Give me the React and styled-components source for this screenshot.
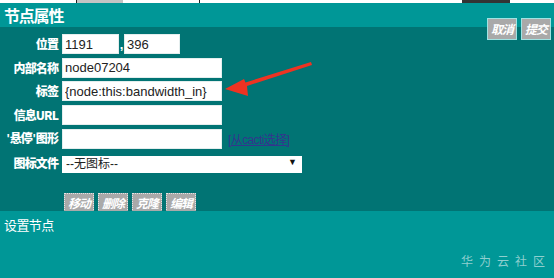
import React from "react";
import styled, { createGlobalStyle } from "styled-components";

const Global = createGlobalStyle`
  html, body { margin: 0; padding: 0; background: #009797; }
  body { font-family: "Liberation Sans", "Noto Sans CJK SC", Arial, sans-serif; }
  * { box-sizing: border-box; }
`;

const Page = styled.div`
  position: relative;
  width: 554px;
  height: 278px;
  overflow: hidden;
  display: flex;
  flex-direction: column;
`;

const TopStrip = styled.div`
  height: 3px;
  background: #fff;
  display: flex;
  align-items: stretch;
`;

const StripGap = styled.div`
  width: ${(p) => p.$w}px;
  ${(p) => (p.$line ? "border-right: 1px solid #222;" : "")}
  background: ${(p) => p.$bg || "transparent"};
`;

const Header = styled.div`
  height: 24px;
  background: #009797;
  display: flex;
  justify-content: space-between;
  padding-left: 4px;
  padding-right: 3px;
`;

const Title = styled.div`
  color: #fff;
  font-family: "Noto Sans CJK SC", sans-serif;
  font-weight: 700;
  font-size: 16px;
  letter-spacing: -1.2px;
  line-height: 24px;
`;

const TopButtons = styled.div`
  position: relative;
  z-index: 1;
  display: flex;
  gap: 4px;
  margin-top: 15px;
  height: 22px;
`;

const Btn = styled.button`
  width: 30px;
  height: ${(p) => (p.$tall ? 22 : 21)}px;
  padding: 0;
  background: #a9a9a9;
  border: 1px ${(p) => (p.$tall ? "solid #9fe3e3" : "dotted #e6e6e6")};
  color: #fff;
  font-family: "Noto Sans CJK SC", sans-serif;
  font-style: italic;
  font-weight: 700;
  font-size: 12px;
  letter-spacing: -1px;
  line-height: 1;
  cursor: pointer;
`;

const Body = styled.div`
  height: 184px;
  background: #017474;
  padding-top: 7px;
  display: flex;
  flex-direction: column;
`;

const Form = styled.div`
  display: grid;
  grid-template-columns: 58px auto;
  column-gap: 4px;
  row-gap: 3.5px;
  align-items: center;
  justify-items: start;
`;

const Label = styled.div`
  justify-self: end;
  color: #fff;
  font-family: "Noto Sans CJK SC", "Liberation Sans", sans-serif;
  font-weight: 900;
  font-size: 12px;
  letter-spacing: -0.9px;
  white-space: nowrap;
  line-height: 20px;
`;

const Quote = styled.span`
  font-family: "Liberation Sans", sans-serif;
  font-weight: 700;
  padding: 0 1px;
`;

const Field = styled.div`
  display: flex;
  align-items: center;
  height: 20px;
`;

const Input = styled.input`
  width: ${(p) => p.$w}px;
  height: 20px;
  border: 1px solid #e4eeee;
  background: #fff;
  padding: 0 2px;
  font-family: "Liberation Sans", Arial, sans-serif;
  font-size: 13px;
  color: #222;
  outline: none;
`;

const Comma = styled.span`
  color: #fff;
  font-size: 13px;
  width: 5px;
  text-align: center;
  font-weight: 700;
`;

const Link = styled.a`
  margin-left: 6px;
  color: #34348e;
  font-size: 12px;
  font-family: "Liberation Sans", "Noto Sans CJK SC", sans-serif;
  letter-spacing: -0.6px;
  text-decoration: underline;
`;

const SelectWrap = styled.div`
  position: relative;
  width: 240px;
  height: 17px;
`;

const Select = styled.select`
  appearance: none;
  width: 100%;
  height: 100%;
  border: none;
  background: #fff;
  padding: 0 4px;
  font-family: "Liberation Sans", "Noto Sans CJK SC", sans-serif;
  font-size: 12px;
  color: #222;
  outline: none;
`;

const Caret = styled.span`
  position: absolute;
  right: 5px;
  top: 3px;
  font-size: 9px;
  color: #111;
  pointer-events: none;
`;

const ActionRow = styled.div`
  display: flex;
  gap: 4px;
  margin-top: 20px;
  margin-left: 64px;
`;

const Footer = styled.div`
  flex: 1;
  background: #009797;
  display: flex;
  flex-direction: column;
  padding: 5px 9px 0 4px;
`;

const FooterText = styled.div`
  color: #fff;
  font-family: "Noto Sans CJK SC", sans-serif;
  font-size: 13px;
  letter-spacing: -0.6px;
  line-height: 18px;
`;

const Watermark = styled.div`
  align-self: flex-end;
  margin-top: 18px;
  color: #8fcfcf;
  font-family: "Noto Sans CJK SC", sans-serif;
  font-size: 12px;
  letter-spacing: 6px;
  margin-right: -6px;
`;

const Arrow = styled.svg`
  position: absolute;
  left: 223px;
  top: 57px;
  pointer-events: none;
`;

export default function App() {
  return (
    <>
      <Global />
      <Page>
        <TopStrip>
          <StripGap $w={77} $line />
          <StripGap $w={46} $bg="#c4c4c4" />
          <StripGap $w={77} $line />
          <StripGap $w={262} />
          <StripGap $w={48} $bg="#333" />
        </TopStrip>
        <Header>
          <Title>节点属性</Title>
          <TopButtons>
            <Btn $tall>取消</Btn>
            <Btn $tall>提交</Btn>
          </TopButtons>
        </Header>
        <Body>
          <Form>
            <Label>位置</Label>
            <Field>
              <Input $w={57} defaultValue="1191" />
              <Comma>,</Comma>
              <Input $w={56} defaultValue="396" />
            </Field>
            <Label>内部名称</Label>
            <Field>
              <Input $w={160} defaultValue="node07204" />
            </Field>
            <Label>标签</Label>
            <Field>
              <Input $w={160} defaultValue="{node:this:bandwidth_in}" />
            </Field>
            <Label>信息URL</Label>
            <Field>
              <Input $w={160} defaultValue="" />
            </Field>
            <Label>
              <Quote>'</Quote>悬停<Quote>'</Quote>图形
            </Label>
            <Field>
              <Input $w={160} defaultValue="" />
              <Link href="#">[从cacti选择]</Link>
            </Field>
            <Label>图标文件</Label>
            <Field>
              <SelectWrap>
                <Select defaultValue="none">
                  <option value="none">--无图标--</option>
                </Select>
                <Caret>▼</Caret>
              </SelectWrap>
            </Field>
          </Form>
          <ActionRow>
            <Btn>移动</Btn>
            <Btn>删除</Btn>
            <Btn>克隆</Btn>
            <Btn>编辑</Btn>
          </ActionRow>
        </Body>
        <Footer>
          <FooterText>设置节点</FooterText>
          <Watermark>华为云社区</Watermark>
        </Footer>
        <Arrow width="92" height="40" viewBox="0 0 92 40">
          <path
            d="M2 32 L21 22 L22.5 25.5 L88 5 L89 8 L24 29 L25 39 Z"
            fill="#ee3322"
          />
        </Arrow>
      </Page>
    </>
  );
}
